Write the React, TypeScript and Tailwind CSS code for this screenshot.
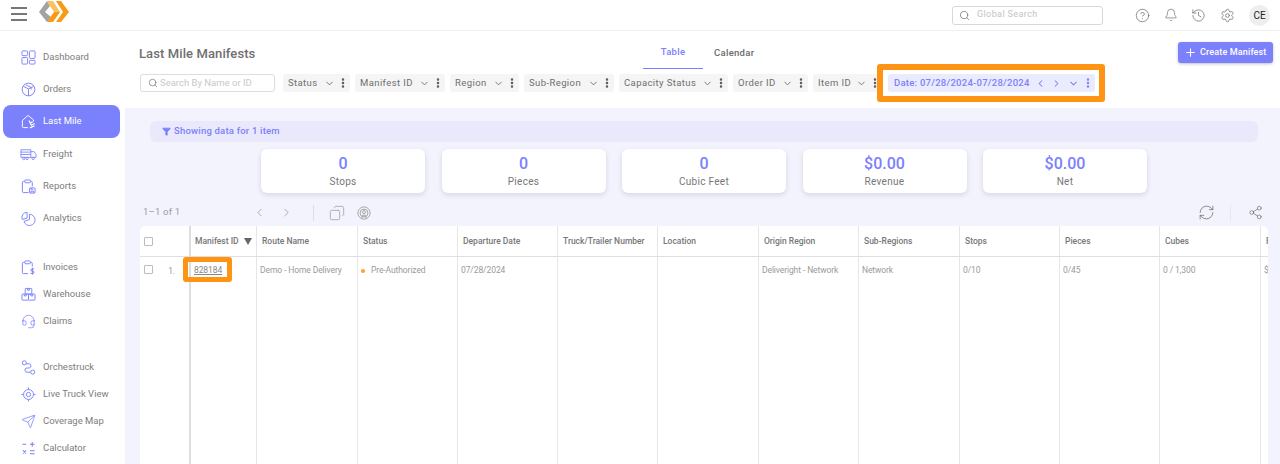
import {
  Bell,
  ChevronDown,
  ChevronLeft,
  ChevronRight,
  CircleHelp,
  Copy,
  EllipsisVertical,
  Filter,
  Headset,
  History,
  Plus,
  RefreshCw,
  Search,
  Send,
  Settings,
  Share2,
} from "lucide-react";

const font = "font-['Roboto','Liberation_Sans',sans-serif]";

function Logo() {
  return (
    <svg width="30" height="23" viewBox="0 0 30 23" className="ml-[12px]">
      <path d="M8 1 L0 12 L8 22 L12 17 L6 12 L11 6 Z" fill="#a3a3a3" />
      <path d="M8 1 H14 L21 12 H15 L11 6 Z" fill="#fbc15e" />
      <path d="M15 12 H21 L14 22 H8 Z" fill="#f79a16" />
      <path d="M17 1 H22 L30 12 L22 22 H17 L24 12 Z" fill="#f79a16" />
    </svg>
  );
}

type IconProps = { className?: string };

function DashIcon({ className }: IconProps) {
  return (
    <svg viewBox="0 0 16 16" fill="none" stroke="currentColor" strokeWidth="1" className={className}>
      <rect x="1" y="1" width="6" height="5" rx="1" />
      <rect x="1" y="8" width="6" height="7" rx="1" />
      <rect x="9" y="1" width="6" height="8" rx="1" />
      <rect x="9" y="11" width="6" height="4" rx="1" />
    </svg>
  );
}

function BoxIcon({ className }: IconProps) {
  return (
    <svg viewBox="0 0 16 16" fill="none" stroke="currentColor" strokeWidth="1" className={className}>
      <circle cx="8" cy="8" r="6.8" />
      <path d="M2.5 4.6 8 7.4l5.5-2.8M8 7.4V14.8M5.2 3 10.8 5.8V8" />
    </svg>
  );
}

function HomeTruckIcon({ className }: IconProps) {
  return (
    <svg viewBox="0 0 16 16" fill="none" stroke="currentColor" strokeWidth="1" className={className}>
      <path d="M7.5 14.5H2.500a1 1 0 0 1-1-1V6.800L7.500 1.500l5.800 4.800V8" />
      <path d="M8.500 7l2.500 5 3.500-1.800" strokeWidth="1.300" />
      <path d="M9.500 14.800l5-2.300M10 9.500l2.500-1.200" strokeWidth="1.300" />
    </svg>
  );
}

function FreightIcon({ className }: IconProps) {
  return (
    <svg viewBox="0 0 18 12" fill="none" stroke="currentColor" strokeWidth="0.9" className={`${className} !w-[17px] !h-[13px] shrink-0`}>
      <path d="M1 1h10.500v8H1zM1 3.500h10.500M1 6h10.500" />
      <path d="M11.500 3H15l2 3v3h-5.500" />
      <circle cx="4" cy="10.300" r="1.200" />
      <circle cx="7.500" cy="10.300" r="1.200" />
      <circle cx="14" cy="10.300" r="1.200" />
    </svg>
  );
}

function ReportIcon({ className }: IconProps) {
  return (
    <svg viewBox="0 0 16 16" fill="none" stroke="currentColor" strokeWidth="1" className={className}>
      <path d="M8 14.500H2.500a1 1 0 0 1-1-1V3.500a1 1 0 0 1 1-1H4M10 2.500h1a1 1 0 0 1 1 1V8" />
      <rect x="4" y="1" width="6" height="3" rx="1" />
      <rect x="9" y="9.500" width="6" height="5.500" rx="0.800" />
      <path d="M10.500 15v-2h3v2M10.500 9.500v1.500h2.500" />
    </svg>
  );
}

function PieIcon({ className }: IconProps) {
  return (
    <svg viewBox="0 0 16 16" fill="none" stroke="currentColor" strokeWidth="1" className={className}>
      <path d="M9 3.500a6 6 0 1 1-5.800 7.500L9 9.200Z" />
      <path d="M6.500 1.500v6L1.500 9a5.200 5.200 0 0 1 5-7.500Z" />
    </svg>
  );
}

function InvoiceIcon({ className }: IconProps) {
  return (
    <svg viewBox="0 0 16 16" fill="none" stroke="currentColor" strokeWidth="1" className={className}>
      <path d="M7.500 14.500H2.500a1 1 0 0 1-1-1V3.500a1 1 0 0 1 1-1H4M10 2.500h1a1 1 0 0 1 1 1V7" />
      <rect x="4" y="1" width="6" height="3" rx="1" />
      <path d="M14 9.500h-2.300a1.100 1.100 0 0 0 0 2.400h1a1.100 1.100 0 0 1 0 2.400H10M12.200 8.300v7.400" />
    </svg>
  );
}

function WarehouseIcon({ className }: IconProps) {
  return (
    <svg viewBox="0 0 16 16" fill="none" stroke="currentColor" strokeWidth="1" className={className}>
      <rect x="4.500" y="1.500" width="7" height="6" rx="0.700" />
      <rect x="1" y="7.500" width="7" height="6.500" rx="0.700" />
      <rect x="8" y="7.500" width="7" height="6.500" rx="0.700" />
      <path d="M7 1.500v2h2v-2M3.500 7.500v2h2v-2M10.500 7.500v2h2v-2" />
    </svg>
  );
}

function ClaimsIcon({ className }: IconProps) {
  return <Headset className={className} strokeWidth={1.200} />;
}

function RouteIcon({ className }: IconProps) {
  return (
    <svg viewBox="0 0 16 16" fill="none" stroke="currentColor" strokeWidth="1" className={className}>
      <circle cx="3.500" cy="3" r="2.200" />
      <circle cx="12.500" cy="13" r="2.200" />
      <path d="M5.500 4h3.300a2.300 2.300 0 0 1 0 4.500H6.500a2 2 0 0 0 0 4.500h3.500" />
    </svg>
  );
}

function TargetIcon({ className }: IconProps) {
  return (
    <svg viewBox="0 0 16 16" fill="none" stroke="currentColor" strokeWidth="1" className={className}>
      <circle cx="8" cy="8" r="5.300" />
      <circle cx="8" cy="8" r="2.300" />
      <path d="M8 .5v2.200M8 13.300v2.200M.5 8h2.200M13.300 8h2.200" />
    </svg>
  );
}

function CoverageIcon({ className }: IconProps) {
  return <Send className={className} strokeWidth={1.200} />;
}

function CalcIcon({ className }: IconProps) {
  return (
    <svg viewBox="0 0 16 16" fill="none" stroke="currentColor" strokeWidth="1.100" className={className}>
      <path d="M1.500 3.500h4M12 1v5M9.500 3.500h5M2 10l3.500 3.500M5.500 10 2 13.500M9.500 10.500h5M9.500 13.500h5" />
    </svg>
  );
}

function SignalIcon({ className }: IconProps) {
  return (
    <svg viewBox="0 0 16 16" fill="none" stroke="currentColor" strokeWidth="1" className={className}>
      <circle cx="8" cy="8" r="7" />
      <circle cx="8" cy="8" r="4.500" />
      <circle cx="8" cy="7" r="1.700" />
      <path d="M5.500 14.300 6.500 10.500h3l1 3.800" />
    </svg>
  );
}

function NavItem({
  label,
  Icon,
  active,
  rowClass,
}: {
  label: string;
  Icon: React.ComponentType<IconProps>;
  active?: boolean;
  rowClass: string;
}) {
  return (
    <div
      className={`flex items-center gap-[7px] ml-[3px] mr-[5px] pl-[18px] rounded-lg text-[9.5px] ${rowClass} ${
        active ? "bg-[#7b80fc] text-white" : "text-[#7d7d7d]"
      }`}
    >
      <span className={`w-[15px] h-[15px] flex items-center justify-center ${active ? "text-white" : "text-[#7b80fc]"}`}>
        <Icon className="w-[15px] h-[15px]" />
      </span>
      {label}
    </div>
  );
}

function Chip({ label, width }: { label: string; width: string }) {
  return (
    <div className={`flex items-center justify-between h-[18px] rounded-[3px] bg-[#f5f5f5] pl-[5px] pr-[1px] text-[#6f6f6f] ${width}`}>
      <span className="whitespace-nowrap tracking-[0.4px]">{label}</span>
      <span className="flex items-center">
        <ChevronDown className="w-[11px] h-[11px] mr-[2px]" strokeWidth={2} />
        <EllipsisVertical className="w-[12px] h-[12px] text-[#555]" strokeWidth={3} />
      </span>
    </div>
  );
}

function StatCard({ value, label }: { value: string; label: string }) {
  return (
    <div className="w-[164px] h-[44px] shrink-0 rounded-md bg-white shadow-[0_2px_5px_rgba(60,60,110,0.16)] flex flex-col items-center justify-center pt-[1px]">
      <div className="text-[16px] leading-[19px] font-medium text-[#7b80fc]">{value}</div>
      <div className="text-[10px] leading-[16px] mt-[1px] tracking-[0.3px] text-[#777]">{label}</div>
    </div>
  );
}

const columns = [
  { title: "Route Name", cell: "Demo - Home Delivery", width: "w-[101px]" },
  { title: "Status", cell: "Pre-Authorized", width: "w-[100px]", dot: true },
  { title: "Departure Date", cell: "07/28/2024", width: "w-[100px]" },
  { title: "Truck/Trailer Number", cell: "", width: "w-[100px]" },
  { title: "Location", cell: "", width: "w-[101px]" },
  { title: "Origin Region", cell: "Deliveright - Network", width: "w-[100px]" },
  { title: "Sub-Regions", cell: "Network", width: "w-[101px]" },
  { title: "Stops", cell: "0/10", width: "w-[100px]" },
  { title: "Pieces", cell: "0/45", width: "w-[100px]" },
  { title: "Cubes", cell: "0 / 1,300", width: "w-[101px]" },
];

export default function App() {
  return (
    <div className={`w-[1280px] h-[464px] overflow-hidden bg-white flex flex-col ${font}`}>
      <header className="h-[31px] shrink-0 flex items-center border-b border-[#eeeeee] pl-[11px] pr-[10px]">
        <div className="w-[16px] -mt-[2px] flex flex-col gap-[4.500px]">
          <span className="h-[1.500px] bg-[#777]" />
          <span className="h-[1.500px] bg-[#777]" />
          <span className="h-[1.500px] bg-[#777]" />
        </div>
        <div className="-mt-[8px]">
          <Logo />
        </div>
        <div className="ml-auto flex items-center">
          <div className="w-[151px] h-[19px] rounded-[3px] border border-[#d8d8d8] flex items-center pl-[6px] text-[9px] tracking-[0.4px] text-[#c4c4c4]">
            <Search className="w-[11px] h-[11px] text-[#666] mr-[7px]" strokeWidth={1.500} />
            Global Search
          </div>
          <CircleHelp className="w-[15px] h-[15px] ml-[32px] text-[#6d6d6d]" strokeWidth={1.200} />
          <Bell className="w-[14px] h-[14px] ml-[14px] text-[#6d6d6d]" strokeWidth={1.200} />
          <History className="w-[15px] h-[15px] ml-[13px] text-[#6d6d6d]" strokeWidth={1.200} />
          <Settings className="w-[15px] h-[15px] ml-[14px] text-[#6d6d6d]" strokeWidth={1.200} />
          <div className="w-[21px] h-[21px] ml-[14px] rounded-full bg-[#eeeeee] flex items-center justify-center text-[10px] text-[#222]">
            CE
          </div>
        </div>
      </header>

      <div className="flex flex-1 min-h-0">
        <aside className="w-[125px] shrink-0 flex flex-col pt-[10px]">
          <NavItem label="Dashboard" Icon={DashIcon} rowClass="h-[32px]" />
          <NavItem label="Orders" Icon={BoxIcon} rowClass="h-[32px]" />
          <NavItem label="Last Mile" Icon={HomeTruckIcon} active rowClass="h-[33px]" />
          <NavItem label="Freight" Icon={FreightIcon} rowClass="h-[32px]" />
          <NavItem label="Reports" Icon={ReportIcon} rowClass="h-[32px]" />
          <NavItem label="Analytics" Icon={PieIcon} rowClass="h-[32px]" />
          <div className="h-[20px]" />
          <NavItem label="Invoices" Icon={InvoiceIcon} rowClass="h-[27px]" />
          <NavItem label="Warehouse" Icon={WarehouseIcon} rowClass="h-[27px]" />
          <NavItem label="Claims" Icon={ClaimsIcon} rowClass="h-[27px]" />
          <div className="h-[19px]" />
          <NavItem label="Orchestruck" Icon={RouteIcon} rowClass="h-[27px]" />
          <NavItem label="Live Truck View" Icon={TargetIcon} rowClass="h-[27px]" />
          <NavItem label="Coverage Map" Icon={CoverageIcon} rowClass="h-[27px]" />
          <NavItem label="Calculator" Icon={CalcIcon} rowClass="h-[27px]" />
        </aside>

        <main className="flex-1 min-w-0 flex flex-col">
          <section className="h-[77px] shrink-0 pl-[15px] pr-[7px]">
            <div className="h-[38px] flex items-center">
              <h1 className="w-[503px] -ml-[1px] mr-[1px] pt-[7px] text-[13px] font-medium tracking-[0.1px] text-[#6f6f6f]">Last Mile Manifests</h1>
              <div className="w-[60px] h-[38px] pt-[6px] border-b-[1.500px] border-[#7b80fc] flex items-center justify-center text-[9.5px] font-medium tracking-[0.3px] text-[#7b80fc]">
                Table
              </div>
              <div className="ml-[11px] pt-[6px] text-[9.5px] font-medium tracking-[0.3px] text-[#6a6a6a]">Calendar</div>
              <button className="ml-auto mt-[5px] w-[95px] h-[21px] rounded-[3px] bg-[#7b80fc] shadow-[0_1px_3px_rgba(0,0,0,0.25)] flex items-center pl-[6px] gap-[3px] text-[9px] font-medium tracking-[0.15px] text-white">
                <Plus className="w-[13px] h-[13px]" strokeWidth={2} />
                Create Manifest
              </button>
            </div>
            <div className="flex items-center mt-[5px] text-[9.5px]">
              <div className="w-[135px] h-[18px] mr-[8px] rounded-[3px] border border-[#dddddd] flex items-center pl-[7px] text-[9.5px] text-[#c8c8c8]">
                <Search className="w-[10px] h-[10px] text-[#666] mr-[2px]" strokeWidth={1.500} />
                Search By Name or ID
              </div>
              <div className="flex gap-[5px]">
                <Chip label="Status" width="w-[67px]" />
                <Chip label="Manifest ID" width="w-[90px]" />
                <Chip label="Region" width="w-[69px]" />
                <Chip label="Sub-Region" width="w-[90px]" />
                <Chip label="Capacity Status" width="w-[109px]" />
                <Chip label="Order ID" width="w-[75px]" />
                <Chip label="Item ID" width="w-[69px]" />
              </div>
              <div className="relative ml-[6px] h-[18px] w-[207px] rounded-[3px] bg-[#ebebfe] pl-[6px] pr-[1px] flex items-center justify-between text-[#7b80fc]">
                <span className="whitespace-nowrap tracking-[0.25px] font-medium">Date: 07/28/2024-07/28/2024</span>
                <span className="flex items-center">
                  <ChevronLeft className="w-[11px] h-[11px]" strokeWidth={2.200} />
                  <ChevronRight className="w-[11px] h-[11px] ml-[5px]" strokeWidth={2.200} />
                  <ChevronDown className="w-[11px] h-[11px] ml-[6px]" strokeWidth={2.200} />
                  <EllipsisVertical className="w-[12px] h-[12px] ml-[3px]" strokeWidth={3} />
                </span>
                <div className="absolute -left-[11px] -top-[10px] w-[228px] h-[38px] rounded-[3px] border-[6px] border-[#ff9313]" />
              </div>
            </div>
          </section>

          <section className="flex-1 min-h-0 bg-[#f3f3fd] pl-[15px] pr-[12px] pt-[13px]">
            <div className="h-[21px] w-[1108px] ml-[10px] rounded-md bg-[#e9e9fb] flex items-center pl-[12px] gap-[3px] text-[9.5px] font-medium tracking-[0.2px] text-[#7b80fc]">
              <Filter className="w-[9px] h-[9px] fill-[#7b80fc]" strokeWidth={2} />
              Showing data for 1 item
            </div>
            <div className="flex gap-[16.500px] ml-[121px] mt-[7px]">
              <StatCard value="0" label="Stops" />
              <StatCard value="0" label="Pieces" />
              <StatCard value="0" label="Cubic Feet" />
              <StatCard value="$0.00" label="Revenue" />
              <StatCard value="$0.00" label="Net" />
            </div>
            <div className="h-[33px] pt-[6px] flex items-center text-[#9b9b9b]">
              <span className="w-[113px] pl-[3px] text-[9.5px] tracking-[0.2px]">1–1 of 1</span>
              <ChevronLeft className="w-[13px] h-[13px] text-[#8f8f8f]" strokeWidth={1.300} />
              <ChevronRight className="w-[13px] h-[13px] ml-[14px] text-[#8f8f8f]" strokeWidth={1.300} />
              <span className="w-px h-[16px] bg-[#dcdcea] ml-[20px]" />
              <Copy className="w-[16px] h-[16px] ml-[15px] -scale-x-100 text-[#9a9a9a]" strokeWidth={1.100} />
              <SignalIcon className="w-[14px] h-[14px] ml-[12px] text-[#9a9a9a]" />
              <RefreshCw className="w-[17px] h-[17px] ml-auto text-[#6f6f6f]" strokeWidth={1.100} />
              <span className="w-px h-[16px] bg-[#e6e6f2] ml-[15px]" />
              <Share2 className="w-[15px] h-[15px] ml-[17px] mr-[5px] text-[#6f6f6f]" strokeWidth={1.100} />
            </div>

            <div className="h-[300px] w-[1128px] overflow-hidden rounded-t-md bg-white text-[#9a9a9a]">
              <div className="flex h-[31px] border-b border-[#dfdfdf] text-[8.5px] font-medium text-[#777]">
                <div className="w-[51px] shrink-0 border-r-2 border-[#dedede] flex items-center pl-[4px]">
                  <span className="w-[9px] h-[9px] rounded-[1px] border border-[#bbbbbb]" />
                </div>
                <div className="w-[66px] shrink-0 border-r border-[#e6e6e6] flex items-center pl-[4px]">
                  Manifest ID
                  <span className="ml-[5px] w-0 h-0 border-x-[4px] border-x-transparent border-t-[7px] border-t-[#666]" />
                </div>
                {columns.map((c) => (
                  <div key={c.title} className={`${c.width} shrink-0 border-r border-[#e6e6e6] flex items-center pl-[5px] whitespace-nowrap`}>
                    {c.title}
                  </div>
                ))}
                <div className="w-[20px] shrink-0 flex items-center pl-[5px]">F</div>
              </div>
              <div className="flex h-[270px] text-[8.5px] tracking-[-0.1px]">
                <div className="w-[51px] shrink-0 border-r-2 border-[#dedede] flex items-start justify-between pl-[4px] pr-[14px] pt-[8px]">
                  <span className="w-[9px] h-[9px] rounded-[1px] border border-[#bbbbbb]" />
                  <span>1.</span>
                </div>
                <div className="w-[66px] shrink-0 border-r border-[#e6e6e6] pl-[3px] pt-[7px] relative">
                  <span className="underline text-[#888]">828184</span>
                  <div className="absolute -left-[8px] top-0 w-[49px] h-[25px] rounded-[3px] border-[5px] border-[#ff9313]" />
                </div>
                {columns.map((c) => (
                  <div key={c.title} className={`${c.width} shrink-0 border-r border-[#e6e6e6] pl-[3px] pt-[7px] whitespace-nowrap`}>
                    {c.dot && <span className="inline-block w-[4px] h-[4px] mr-[6px] rounded-full bg-[#ff9f2e]" />}
                    {c.cell}
                  </div>
                ))}
                <div className="w-[20px] shrink-0 pl-[3px] pt-[7px]">$</div>
              </div>
            </div>
          </section>
        </main>
      </div>
    </div>
  );
}
